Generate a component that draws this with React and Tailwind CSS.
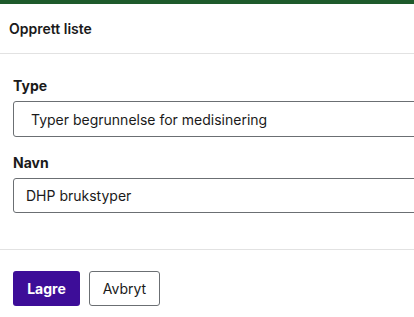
import React from 'react';

const App = () => {
  return (
    <div className="w-[414px] h-[317px] overflow-hidden bg-white font-['Inter',sans-serif] text-[#1a1a1a]">
      {/* Top strip of the page behind the modal */}
      <div className="h-[4px] bg-[#1e5a2b]" />

      {/* Header */}
      <div className="h-[50px] flex items-center px-[9px] border-b border-[#e2e2e2]">
        <h1 className="text-[14px] font-semibold">Opprett liste</h1>
      </div>

      {/* Body */}
      <div className="pl-[13px] pt-[23px] pb-[36px] border-b border-[#e2e2e2]">
        <label className="block text-[14px] font-bold leading-[18px]">Type</label>
        <div className="mt-[6px] w-[430px] h-[36px] border border-[#6b6f73] rounded-[3px] flex items-center pl-[17px] text-[14px]">
          Typer begrunnelse for medisinering
        </div>

        <label className="block mt-[17px] text-[14px] font-bold leading-[18px]">Navn</label>
        <div className="mt-[6px] w-[430px] h-[35px] border border-[#6b6f73] rounded-[3px] flex items-center pl-[12px] text-[14px]">
          DHP brukstyper
        </div>
      </div>

      {/* Footer */}
      <div className="flex gap-[9px] pl-[13px] pt-[21px]">
        <button className="h-[35px] w-[67px] rounded-[3px] bg-[#3d0d98] text-white text-[14px] font-bold">
          Lagre
        </button>
        <button className="h-[35px] w-[71px] rounded-[3px] border border-[#6b6f73] bg-white text-[14px]">
          Avbryt
        </button>
      </div>
    </div>
  );
};

export default App;
